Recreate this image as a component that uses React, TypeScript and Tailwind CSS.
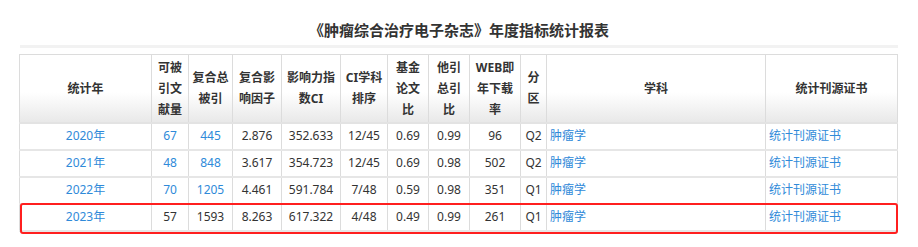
import React from "react"

// 年度指标数据
const rows = [
    { year: "2020年", citable: "67", total: "445", impact: "2.876", ci: "352.633", rank: "12/45", fund: "0.69", other: "0.99", web: "96", zone: "Q2", linked: true },
    { year: "2021年", citable: "48", total: "848", impact: "3.617", ci: "354.723", rank: "12/45", fund: "0.69", other: "0.98", web: "502", zone: "Q2", linked: true },
    { year: "2022年", citable: "70", total: "1205", impact: "4.461", ci: "591.784", rank: "7/48", fund: "0.59", other: "0.98", web: "351", zone: "Q1", linked: true },
    { year: "2023年", citable: "57", total: "1593", impact: "8.263", ci: "617.322", rank: "4/48", fund: "0.49", other: "0.99", web: "261", zone: "Q1", linked: false },
]

const headers: string[][] = [
    ["统计年"],
    ["可被", "引文", "献量"],
    ["复合总", "被引"],
    ["复合影", "响因子"],
    ["影响力指", "数CI"],
    ["CI学科", "排序"],
    ["基金", "论文", "比"],
    ["他引", "总引", "比"],
    ["WEB即", "年下载", "率"],
    ["分", "区"],
    ["学科"],
    ["统计刊源证书"],
]

const colWidths = ["w-[132px]", "w-[37px]", "w-[44px]", "w-[49px]", "w-[59px]", "w-[47px]", "w-[41px]", "w-[41px]", "w-[51px]", "w-[26px]", "w-[219px]", "w-[132px]"]

const td = "h-[27px] border-x border-x-[#dcdcdc] border-b-2 border-b-[#e6e6e6] text-center whitespace-nowrap p-0"
const link = "text-[#2f8ad9]"

export default function App() {
    return (
        <div className="w-[918px] h-[247px] bg-white text-[12px] text-[#333] font-['Noto_Sans','Noto_Sans_CJK_SC',sans-serif]">
            {/* 标题 */}
            <div className="mx-[20px] pt-[20px] pb-[5px] border-b-[3px] border-b-[#f2f2f2] text-center text-[15px] leading-[20px] font-bold text-[#333]">
                《肿瘤综合治疗电子杂志》年度指标统计报表
            </div>

            <div className="relative ml-[19px] mt-[6px] w-[878px]">
                <table className="w-[878px] table-fixed border-collapse">
                    <colgroup>
                        {colWidths.map((w, i) => (
                            <col key={i} className={w} />
                        ))}
                    </colgroup>
                    <thead>
                        <tr className="bg-gradient-to-b from-white from-55% to-[#e8e8e8]">
                            {headers.map((lines, i) => (
                                <th
                                    key={i}
                                    className="h-[68px] p-0 border border-[#dcdcdc] border-b-2 border-b-[#e3e3e3] text-center font-bold leading-[21px] whitespace-nowrap text-[#333]"
                                >
                                    {lines.map((l, j) => (
                                        <div key={j}>{l}</div>
                                    ))}
                                </th>
                            ))}
                        </tr>
                    </thead>
                    <tbody>
                        {rows.map((r) => (
                            <tr key={r.year}>
                                <td className={`${td} ${link}`}>{r.year}</td>
                                <td className={`${td} ${r.linked ? link : ""}`}>{r.citable}</td>
                                <td className={`${td} ${r.linked ? link : ""}`}>{r.total}</td>
                                <td className={td}>{r.impact}</td>
                                <td className={td}>{r.ci}</td>
                                <td className={td}>{r.rank}</td>
                                <td className={td}>{r.fund}</td>
                                <td className={td}>{r.other}</td>
                                <td className={td}>{r.web}</td>
                                <td className={td}>{r.zone}</td>
                                <td className={`${td} !text-left pl-[3px] ${link}`}>肿瘤学</td>
                                <td className={`${td} !text-left pl-[3px] ${link}`}>统计刊源证书</td>
                            </tr>
                        ))}
                    </tbody>
                </table>

                {/* 高亮最新年度 */}
                <div className="pointer-events-none absolute left-[1px] right-[-1px] bottom-[-2px] h-[31px] rounded-[3px] border-2 border-[#ff1f1f]" />
            </div>
        </div>
    )
}
